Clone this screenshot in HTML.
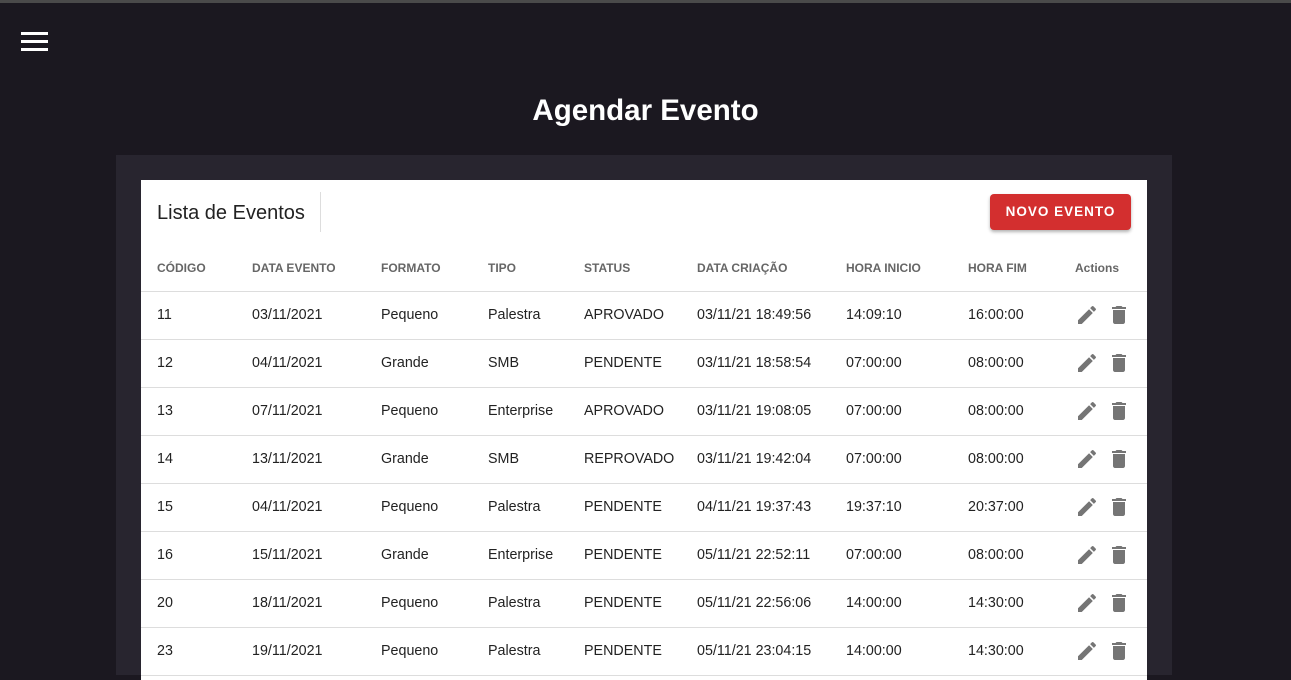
<!DOCTYPE html>
<html><head><meta charset="utf-8"><style>
body{margin:0;width:1291px;height:672px;overflow:hidden;background:#1b1820;font-family:"Liberation Sans",sans-serif;position:relative}
.top{position:absolute;top:0;left:0;width:1291px;height:3px;background:#4a4a4a}
.ham{position:absolute;left:21px;top:32px;width:27px}
.ham div{height:3px;background:#fff;margin-bottom:5px}
h1{position:absolute;top:94px;left:0;width:1291px;text-align:center;margin:0;color:#fff;font-size:29.5px;font-weight:bold;letter-spacing:0}
.wrap{position:absolute;left:116px;top:155px;width:1056px;height:520px;background:#28252f}
.card{position:absolute;left:25px;top:25px;width:1006px;height:500px;background:#fff}
.title{position:absolute;left:16px;top:22px;font-size:20px;color:#222}
.sep{position:absolute;left:179px;top:12px;width:1px;height:40px;background:#ddd}
.btn{position:absolute;left:849px;top:14px;width:141px;height:36px;background:#d32f2f;border-radius:4px;color:#fff;font-size:13.5px;font-weight:bold;letter-spacing:1px;text-align:center;line-height:36px;box-shadow:0 2px 3px rgba(0,0,0,.3)}
table{position:absolute;left:0;top:64px;width:1006px;border-collapse:collapse}
th{height:47px;text-align:left;font-size:12px;color:#666;font-weight:bold;padding:0;border-bottom:1px solid #ddd}
td{height:48px;font-size:14.3px;color:#222;padding:0 0 1px 0;border-bottom:1px solid #ddd;box-sizing:border-box}
th:first-child,td:first-child{padding-left:16px}
svg{vertical-align:middle}
</style></head><body>
<div class="top"></div>
<div class="ham"><div></div><div></div><div></div></div>
<h1>Agendar Evento</h1>
<div class="wrap"><div class="card">
<div class="title">Lista de Eventos</div><div class="sep"></div>
<div class="btn">NOVO EVENTO</div>
<table>
<colgroup><col style="width:111px"><col style="width:129px"><col style="width:107px"><col style="width:96px"><col style="width:113px"><col style="width:149px"><col style="width:122px"><col style="width:107px"><col></colgroup>
<tr><th>CÓDIGO</th><th>DATA EVENTO</th><th>FORMATO</th><th>TIPO</th><th>STATUS</th><th>DATA CRIAÇÃO</th><th>HORA INICIO</th><th>HORA FIM</th><th>Actions</th></tr>
<tbody id="b"></tbody>
</table>
</div></div>
<script>
var r=[["11","03/11/2021","Pequeno","Palestra","APROVADO","03/11/21 18:49:56","14:09:10","16:00:00"],
["12","04/11/2021","Grande","SMB","PENDENTE","03/11/21 18:58:54","07:00:00","08:00:00"],
["13","07/11/2021","Pequeno","Enterprise","APROVADO","03/11/21 19:08:05","07:00:00","08:00:00"],
["14","13/11/2021","Grande","SMB","REPROVADO","03/11/21 19:42:04","07:00:00","08:00:00"],
["15","04/11/2021","Pequeno","Palestra","PENDENTE","04/11/21 19:37:43","19:37:10","20:37:00"],
["16","15/11/2021","Grande","Enterprise","PENDENTE","05/11/21 22:52:11","07:00:00","08:00:00"],
["20","18/11/2021","Pequeno","Palestra","PENDENTE","05/11/21 22:56:06","14:00:00","14:30:00"],
["23","19/11/2021","Pequeno","Palestra","PENDENTE","05/11/21 23:04:15","14:00:00","14:30:00"]];
var ic='<svg width="24" height="24" viewBox="0 0 24 24" style="margin-left:0px"><path fill="#757575" d="M3 17.25V21h3.75L17.81 9.94l-3.75-3.75L3 17.25zM20.71 7.04a1 1 0 0 0 0-1.41l-2.34-2.34a1 1 0 0 0-1.41 0l-1.83 1.83 3.75 3.75 1.83-1.83z"/></svg><svg width="24" height="24" viewBox="0 0 24 24" style="margin-left:8px"><path fill="#757575" d="M6 19c0 1.1.9 2 2 2h8c1.1 0 2-.9 2-2V7H6v12zM19 4h-3.5l-1-1h-5l-1 1H5v2h14V4z"/></svg>';
var h='';r.forEach(function(x){h+='<tr>'+x.map(function(c){return '<td>'+c+'</td>'}).join('')+'<td>'+ic+'</td></tr>'});
document.getElementById('b').innerHTML=h;
</script>
</body></html>
